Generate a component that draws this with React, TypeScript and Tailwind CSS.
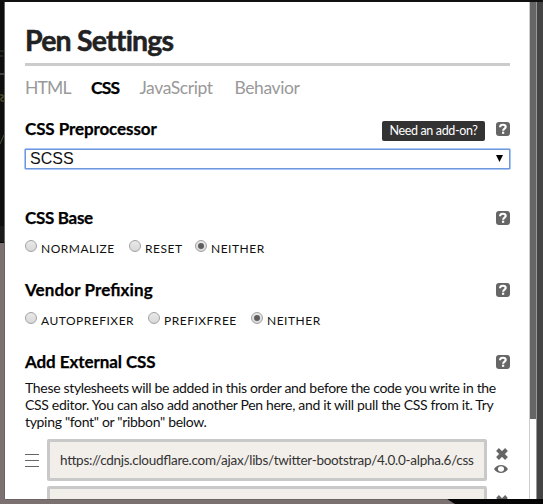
import React from "react";

function Help() {
  return (
    <svg className="block shrink-0" width="14" height="14" viewBox="0 0 14 14">
      <rect width="14" height="14" rx="3" fill="#666" />
      <path d="M4.1 5.2C4.1 3.2 5.4 2.8 6.9 2.8s2.8.6 2.8 2.1c0 1.8-2.6 1.6-2.6 3.9" fill="none" stroke="#fff" strokeWidth="2.1" />
      <rect x="6" y="9.7" width="2.2" height="2.1" fill="#fff" />
    </svg>
  );
}

function Heading({ text, className, children }: { text: string; className: string; children?: React.ReactNode }) {
  return (
    <div className="flex h-5 items-center justify-between">
      <h2 className={`whitespace-nowrap text-[17px] leading-5 font-bold text-black [-webkit-text-stroke:0.25px_#000] [font-feature-settings:'liga'_1] ${className}`}>{text}</h2>
      <div className="flex items-center gap-[11px]">
        {children}
        <Help />
      </div>
    </div>
  );
}

function Choice({ label, checked, className }: { label: string; checked?: boolean; className: string }) {
  return (
    <label className={`flex h-4 shrink-0 gap-1 ${className}`}>
      <span className="flex h-3 w-3 shrink-0 items-center justify-center rounded-full border border-[#a2a2a2] bg-linear-to-b from-[#e9e9e9] to-[#d8d8d8]">
        {checked && <span className="h-1.5 w-1.5 rounded-full bg-[#5d5d5d]" />}
      </span>
      <span className="mt-px whitespace-nowrap text-[12px] leading-4 tracking-[0.5px] text-[#111]">{label}</span>
    </label>
  );
}

function Cross() {
  return (
    <svg className="block" width="12" height="12" viewBox="0 0 12 12">
      <path d="M1.5 1.5 10.5 10.5M10.5 1.5 1.5 10.5" stroke="#666" strokeWidth="3.9" />
    </svg>
  );
}

function Eye() {
  return (
    <svg className="block" width="14" height="8" viewBox="0 0 14 8">
      <path fillRule="evenodd" d="M0 4C3.2-1.2 10.8-1.2 14 4 10.8 9.2 3.2 9.2 0 4ZM7 1.3C2.9 1.3 2.9 6.7 7 6.7S11.1 1.3 7 1.3Z" fill="#666" />
    </svg>
  );
}

export default function App() {
  return (
    <div className="relative flex h-[504px] w-[543px] flex-col overflow-hidden bg-[#7b7171] font-['Lato',sans-serif]">
      <div className="h-0.5 shrink-0 bg-[#111]" />
      <div className="flex h-[497px] shrink-0">
        <div className="relative w-[5px] shrink-0 border-r border-[#666]">
          <div className="h-[224px] bg-[#0d0e0d]" />
          <div className="h-[16px] bg-[#1a1a1a]" />
          <div className="h-px bg-black" />
          <svg className="absolute top-0 left-0" width="4" height="150">
            <path d="M0 49H4M0 54H3" stroke="#344031" />
            <path d="M0 72H4" stroke="#777" />
            <path d="M0 93H3V96H1V99H4" fill="none" stroke="#655e37" />
            <path d="M0 142 4 133" stroke="#46533e" />
          </svg>
        </div>
        <main className="h-[497px] w-[524px] shrink-0 overflow-hidden bg-white pr-[19px] pl-5">
          <h1 className="mt-[20px] h-[41px] whitespace-nowrap text-[28.5px] leading-[36px] font-bold tracking-[-0.8px] text-[#222] [-webkit-text-stroke:0.5px_#222]">Pen Settings</h1>
          <div className="h-[3px] bg-[#ccc]" />
          <nav className="mt-[11px] flex h-[22px] text-[17.5px] leading-[22px] tracking-[-0.42px] text-[#999]">
            <span className="w-[66px] shrink-0 tracking-[-0.8px]">HTML</span>
            <span className="w-[48.5px] shrink-0 font-bold tracking-[-0.8px] text-black [-webkit-text-stroke:0.25px_#000]">CSS</span>
            <span className="w-[95px] shrink-0">JavaScript</span>
            <span className="shrink-0">Behavior</span>
          </nav>
          <div className="mt-5">
            <Heading text="CSS Preprocessor" className="tracking-[-0.1px]">
              <span className="mt-1 h-5 w-[103px] rounded-[2px] bg-[#333] text-center text-[12.5px] leading-5 tracking-[-0.35px] whitespace-nowrap text-white">Need an add-on?</span>
            </Heading>
          </div>
          <div className="-ml-px mt-[9px] flex h-[22px] w-[487px] items-center justify-between rounded-[2px] border border-[#a9c6f5] bg-white">
            <div className="flex h-5 w-full items-center justify-between border border-[#6f97dc] pr-1.5 pl-1">
              <span className="font-['Liberation_Sans',sans-serif] text-[16px] leading-5 text-[#111]">SCSS</span>
              <svg className="-mt-0.5" width="7" height="7" viewBox="0 0 7 7"><path d="M0 0H7L3.5 7Z" fill="#000" /></svg>
            </div>
          </div>
          <div className="mt-[38px]"><Heading text="CSS Base" className="tracking-[-0.3px]" /></div>
          <div className="mt-3 flex h-4">
            <Choice label="NORMALIZE" className="w-[104px]" />
            <Choice label="RESET" className="w-[66px]" />
            <Choice label="NEITHER" checked className="" />
          </div>
          <div className="mt-6"><Heading text="Vendor Prefixing" className="tracking-[0.12px]" /></div>
          <div className="mt-3 flex h-4">
            <Choice label="AUTOPREFIXER" className="w-[123px]" />
            <Choice label="PREFIXFREE" className="w-[103px]" />
            <Choice label="NEITHER" checked className="" />
          </div>
          <div className="mt-6"><Heading text="Add External CSS" className="tracking-[-0.08px]" /></div>
          <p className="mt-[7px] h-[51px] whitespace-nowrap text-[14px] leading-[17px] tracking-[-0.32px] text-[#111]">
            These stylesheets will be added in this order and before the code you write in the<br />
            CSS editor. You can also add another Pen here, and it will pull the CSS from it. Try<br />
            typing "font" or "ribbon" below.
          </p>
          <div className="mt-[9px] flex h-[42px]">
            <div className="mt-[15px] flex w-[22px] shrink-0 flex-col gap-[5px]">
              <div className="h-px w-3.5 bg-[#666]" />
              <div className="h-px w-3.5 bg-[#666]" />
              <div className="h-px w-3.5 bg-[#666]" />
            </div>
            <div className="h-[42px] w-[440px] shrink-0 overflow-hidden rounded-[2px] border-[3px] border-[#c9c9c9] bg-[#f2eeea] pl-[10px] text-[13.5px] leading-[36px] tracking-[-0.27px] whitespace-nowrap text-[#333] [font-feature-settings:'liga'_1]">
              https://cdnjs.cloudflare.com/ajax/libs/twitter-bootstrap/4.0.0-alpha.6/css
            </div>
            <div className="mt-[9px] ml-[7px] flex w-3.5 shrink-0 flex-col items-end gap-[5px]"><Cross /><Eye /></div>
          </div>
          <div className="mt-[5px] flex h-[42px]">
            <div className="ml-[22px] h-[42px] w-[440px] shrink-0 rounded-[2px] border-[3px] border-[#c9c9c9] bg-[#f2eeea]" />
            <div className="mt-[9px] ml-[9px]"><Cross /></div>
          </div>
        </main>
        <div className="flex w-2 shrink-0 border-r border-l border-[#999] border-l-[#ccc] bg-white">
          <div className="h-[417px] w-1.5 bg-[#666]" />
        </div>
        <div className="w-1.5 bg-[#444]" />
      </div>
      <svg className="block shrink-0" width="543" height="5">
        <path d="M447 0H543V5H455Z" fill="#050505" />
        <path d="M5 0H448" stroke="#615a5a" />
      </svg>
    </div>
  );
}
